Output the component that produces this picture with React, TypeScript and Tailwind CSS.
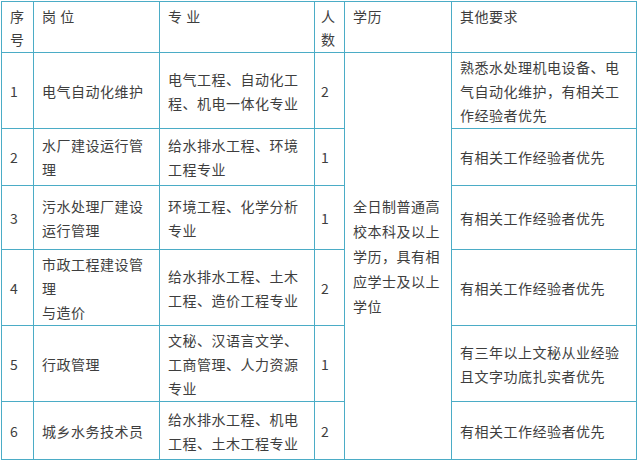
import React from 'react';

type Row = {
  no: string;
  post: React.ReactNode;
  major: string;
  count: string;
  other: string;
  h: string;
};

const rows: Row[] = [
  { no: '1', post: '电气自动化维护', major: '电气工程、自动化工程、机电一体化专业', count: '2', other: '熟悉水处理机电设备、电气自动化维护，有相关工作经验者优先', h: 'h-[76px]' },
  { no: '2', post: '水厂建设运行管理', major: '给水排水工程、环境工程专业', count: '1', other: '有相关工作经验者优先', h: 'h-[57px]' },
  { no: '3', post: '污水处理厂建设运行管理', major: '环境工程、化学分析专业', count: '1', other: '有相关工作经验者优先', h: 'h-[64px]' },
  { no: '4', post: (<>市政工程建设管理<br />与造价</>), major: '给水排水工程、土木工程、造价工程专业', count: '2', other: '有相关工作经验者优先', h: 'h-[76px]' },
  { no: '5', post: '行政管理', major: '文秘、汉语言文学、工商管理、人力资源专业', count: '1', other: '有三年以上文秘从业经验且文字功底扎实者优先', h: 'h-[76px]' },
  { no: '6', post: '城乡水务技术员', major: '给水排水工程、机电工程、土木工程专业', count: '2', other: '有相关工作经验者优先', h: 'h-[58px]' },
];

const cell = 'border border-[#4bacc6] px-2 align-middle';
const head = 'border border-[#4bacc6] px-2 pt-[3px] align-top leading-[23px]';

export default function App() {
  return (
    <div className="min-h-screen bg-white pl-px pt-px">
      <table
        className="table-fixed border-collapse text-[14px] leading-[24px] tracking-[0.5px] text-[#3e3e3e]"
        style={{ fontFamily: '"Microsoft YaHei", "Noto Sans CJK SC", sans-serif' }}
      >
        <colgroup>
          <col className="w-[32px]" />
          <col className="w-[126px]" />
          <col className="w-[155px]" />
          <col className="w-[30px]" />
          <col className="w-[107px]" />
          <col className="w-[185px]" />
        </colgroup>
        <thead>
          <tr className="h-[51px]">
            <th className={`${head} font-normal text-left`}>序号</th>
            <th className={`${head} font-normal text-left`}>岗 位</th>
            <th className={`${head} font-normal text-left`}>专 业</th>
            <th className={`${head} !px-[6px] font-normal text-left`}>人数</th>
            <th className={`${head} font-normal text-left`}>学历</th>
            <th className={`${head} font-normal text-left`}>其他要求</th>
          </tr>
        </thead>
        <tbody>
          {rows.map((r, i) => (
            <tr key={r.no} className={r.h}>
              <td className={cell}>{r.no}</td>
              <td className={cell}>{r.post}</td>
              <td className={cell}>{r.major}</td>
              <td className={`${cell} !px-[6px]`}>{r.count}</td>
              {i === 0 && (
                <td rowSpan={6} className={`${cell} leading-[25px]`}>
                  全日制普通高校本科及以上学历，具有相应学士及以上学位
                </td>
              )}
              <td className={cell}>{r.other}</td>
            </tr>
          ))}
        </tbody>
      </table>
    </div>
  );
}
